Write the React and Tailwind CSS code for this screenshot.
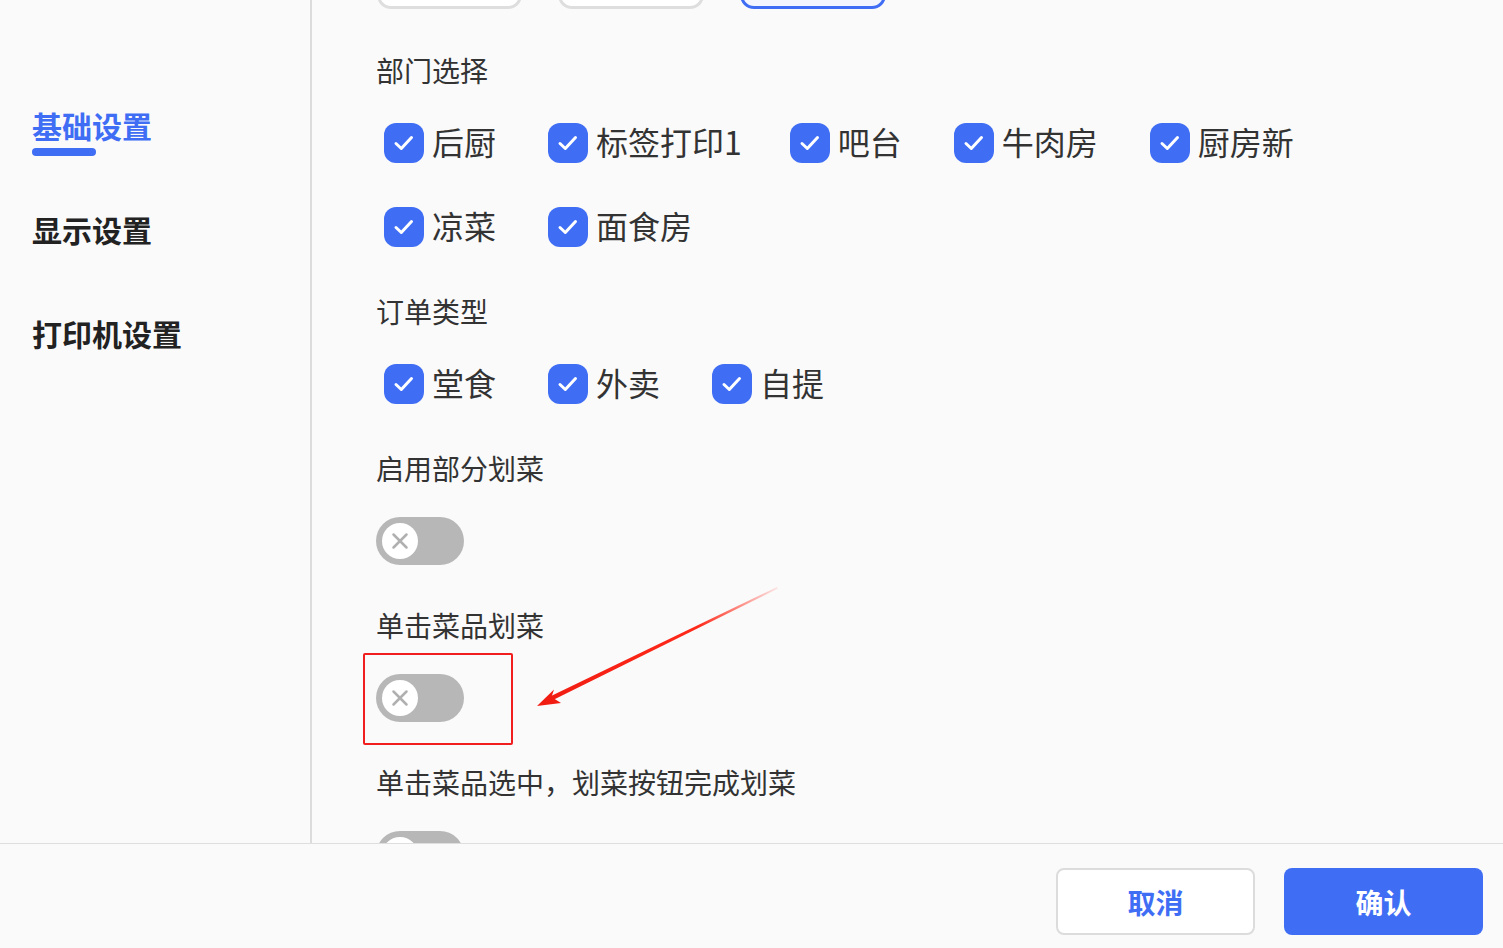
import React from "react";

const FONT = { fontFamily: '"Noto Sans CJK SC", "Noto Sans", sans-serif' };

function Check({ label, mr = "mr-[52px]" }) {
  return (
    <div className={"flex items-center gap-[8px] " + mr}>
      <div className="w-[40px] h-[40px] rounded-[12px] bg-[#3f6ef5] flex items-center justify-center">
        <svg width="40" height="40" viewBox="0 0 40 40" fill="none">
          <path d="M12 20.5 L17.3 25.5 L27.5 14.5" stroke="white" strokeWidth="3" strokeLinecap="round" strokeLinejoin="round" />
        </svg>
      </div>
      <span className="text-[32px] leading-[36px] pb-[4px] text-[#333333]">{label}</span>
    </div>
  );
}

function Toggle({ className = "" }) {
  return (
    <div className={"w-[88px] h-[48px] rounded-full bg-[#b7b7b7] flex items-center px-[6px] shrink-0 " + className}>
      <div className="w-[36px] h-[36px] rounded-full bg-white flex items-center justify-center">
        <svg width="20" height="20" viewBox="0 0 20 20" fill="none">
          <path d="M3.5 3.5 L16.5 16.5 M16.5 3.5 L3.5 16.5" stroke="#b0b0b0" strokeWidth="2.5" strokeLinecap="round" />
        </svg>
      </div>
    </div>
  );
}

function Label({ children, className = "" }) {
  return <div className={"text-[28px] leading-[36px] pb-[4px] text-[#333333] " + className}>{children}</div>;
}

export default function App() {
  return (
    <div className="relative w-[1503px] h-[948px] bg-[#fafafa] flex flex-col overflow-hidden" style={FONT}>
      <div className="flex flex-1 min-h-0">
        <aside className="w-[312px] shrink-0 border-r-2 border-[#dcdcdc] pl-[32px] pt-[107px]">
          <div className="flex flex-col gap-[64px]">
            <div className="relative">
              <div className="text-[30px] leading-[36px] pb-[4px] font-bold text-[#3f6ef5]">基础设置</div>
              <div className="absolute left-0 top-[41px] w-[64px] h-[8px] rounded-full bg-[#3f6ef5]" />
            </div>
            <div className="text-[30px] leading-[36px] pb-[4px] font-bold text-[#222222]">显示设置</div>
            <div className="text-[30px] leading-[36px] pb-[4px] font-bold text-[#222222]">打印机设置</div>
          </div>
        </aside>
        <main className="flex-1 min-w-0 overflow-hidden pl-[64px]">
          <div className="flex gap-[36px] mt-[-51px] pl-[1px]">
            <div className="w-[145px] h-[60px] rounded-[14px] border-[3px] border-[#dedede] bg-white" />
            <div className="w-[146px] h-[60px] rounded-[14px] border-[3px] border-[#dedede] bg-white" />
            <div className="w-[146px] h-[60px] rounded-[14px] border-[3px] border-[#3f6ef5] bg-[#f3f6fe]" />
          </div>
          <Label className="mt-[43px]">部门选择</Label>
          <div className="pl-[8px] mt-[31px] flex flex-col gap-[44px]">
            <div className="flex">
              <Check label="后厨" />
              <Check label="标签打印1" mr="mr-[48px]" />
              <Check label="吧台" />
              <Check label="牛肉房" />
              <Check label="厨房新" />
            </div>
            <div className="flex">
              <Check label="凉菜" />
              <Check label="面食房" />
            </div>
          </div>
          <Label className="mt-[46px]">订单类型</Label>
          <div className="pl-[8px] mt-[31px] flex">
            <Check label="堂食" />
            <Check label="外卖" />
            <Check label="自提" />
          </div>
          <Label className="mt-[46px]">启用部分划菜</Label>
          <Toggle className="mt-[27px]" />
          <Label className="mt-[42px]">单击菜品划菜</Label>
          <Toggle className="mt-[27px]" />
          <Label className="mt-[42px]">单击菜品选中，划菜按钮完成划菜</Label>
          <Toggle className="mt-[27px]" />
        </main>
      </div>
      <footer className="h-[105px] shrink-0 border-t border-[#dedede] bg-[#fafafa] flex justify-end gap-[29px] pr-[20px] pt-[24px]">
        <button className="w-[199px] h-[67px] rounded-[8px] border-2 border-[#dcdcdc] bg-white text-[28px] font-bold text-[#3f6ef5]">取消</button>
        <button className="w-[199px] h-[67px] rounded-[8px] bg-[#3f6ef5] text-[28px] font-bold text-white">确认</button>
      </footer>

      {/* annotation overlay */}
      <div className="absolute left-[363px] top-[653px] w-[150px] h-[92px] border-2 border-[#f01e1e] rounded-[2px] pointer-events-none" />
      <svg className="absolute left-0 top-0 pointer-events-none" width="1503" height="948">
        <defs>
          <linearGradient id="fade" x1="777" y1="587" x2="550" y2="699" gradientUnits="userSpaceOnUse">
            <stop offset="0" stopColor="#ff2a1a" stopOpacity="0.1" />
            <stop offset="0.35" stopColor="#ff2a1a" stopOpacity="1" />
            <stop offset="1" stopColor="#f21d12" stopOpacity="1" />
          </linearGradient>
        </defs>
        <polygon points="777,587 778,588.5 552,700.5 550,696.5" fill="url(#fade)" />
        <polygon points="537,706 554,689.5 551.5,697 561,703" fill="#f21d12" />
      </svg>
    </div>
  );
}
